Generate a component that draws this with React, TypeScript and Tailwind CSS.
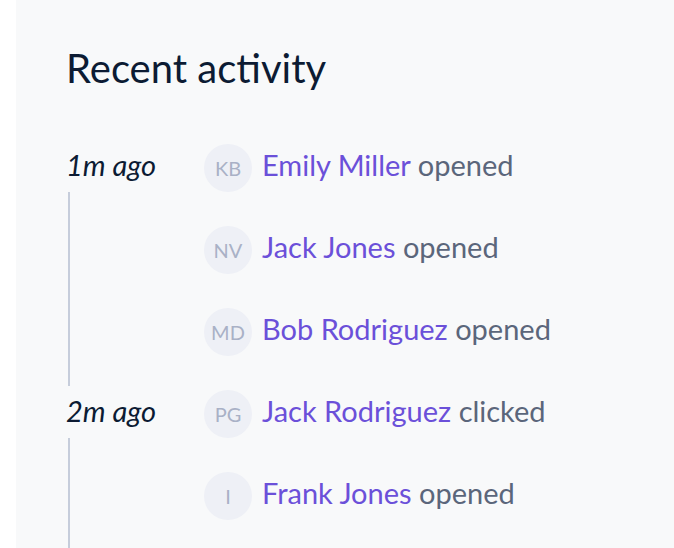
const groups = [
  {
    time: "1m ago",
    events: [
      { initials: "KB", name: "Emily Miller", action: "opened" },
      { initials: "NV", name: "Jack Jones", action: "opened" },
      { initials: "MD", name: "Bob Rodriguez", action: "opened" },
    ],
  },
  {
    time: "2m ago",
    events: [
      { initials: "PG", name: "Jack Rodriguez", action: "clicked" },
      { initials: "I", name: "Frank Jones", action: "opened" },
    ],
  },
];

export default function App() {
  return (
    <div className="h-[548px] overflow-hidden bg-white pl-4 font-['Lato','Noto_Sans',sans-serif]">
      <div className="h-full bg-[#f8f9fa] pl-[50px] pt-[44px]">
        <h1 className="text-[40px] leading-[48px] text-[#0c1b33]">Recent activity</h1>

        <div className="mt-[52px]">
          {groups.map((group) => (
            <div key={group.time} className="flex">
              {/* time label + timeline */}
              <div className="flex w-[138px] shrink-0 flex-col">
                <div className="flex h-12 items-center pb-[6px] text-[29px] italic text-[#0c1b33]">
                  {group.time}
                </div>
                <div className="mb-1 ml-[2px] w-0.5 flex-1 bg-[#c6cddb]" />
              </div>

              <div className="flex flex-col">
                {group.events.map((e) => (
                  <div key={e.name} className="mb-[34px] flex h-12 items-center">
                    <div className="flex h-12 w-12 shrink-0 items-center justify-center rounded-full bg-[#eef0f6] text-[20px] text-[#a9b1c6]">
                      {e.initials}
                    </div>
                    <div className="ml-[10px] whitespace-nowrap pb-[6px] text-[29px]">
                      <span className="text-[#6b50d9]">{e.name}</span>{" "}
                      <span className="text-[#5b667b]">{e.action}</span>
                    </div>
                  </div>
                ))}
              </div>
            </div>
          ))}
        </div>
      </div>
    </div>
  );
}
